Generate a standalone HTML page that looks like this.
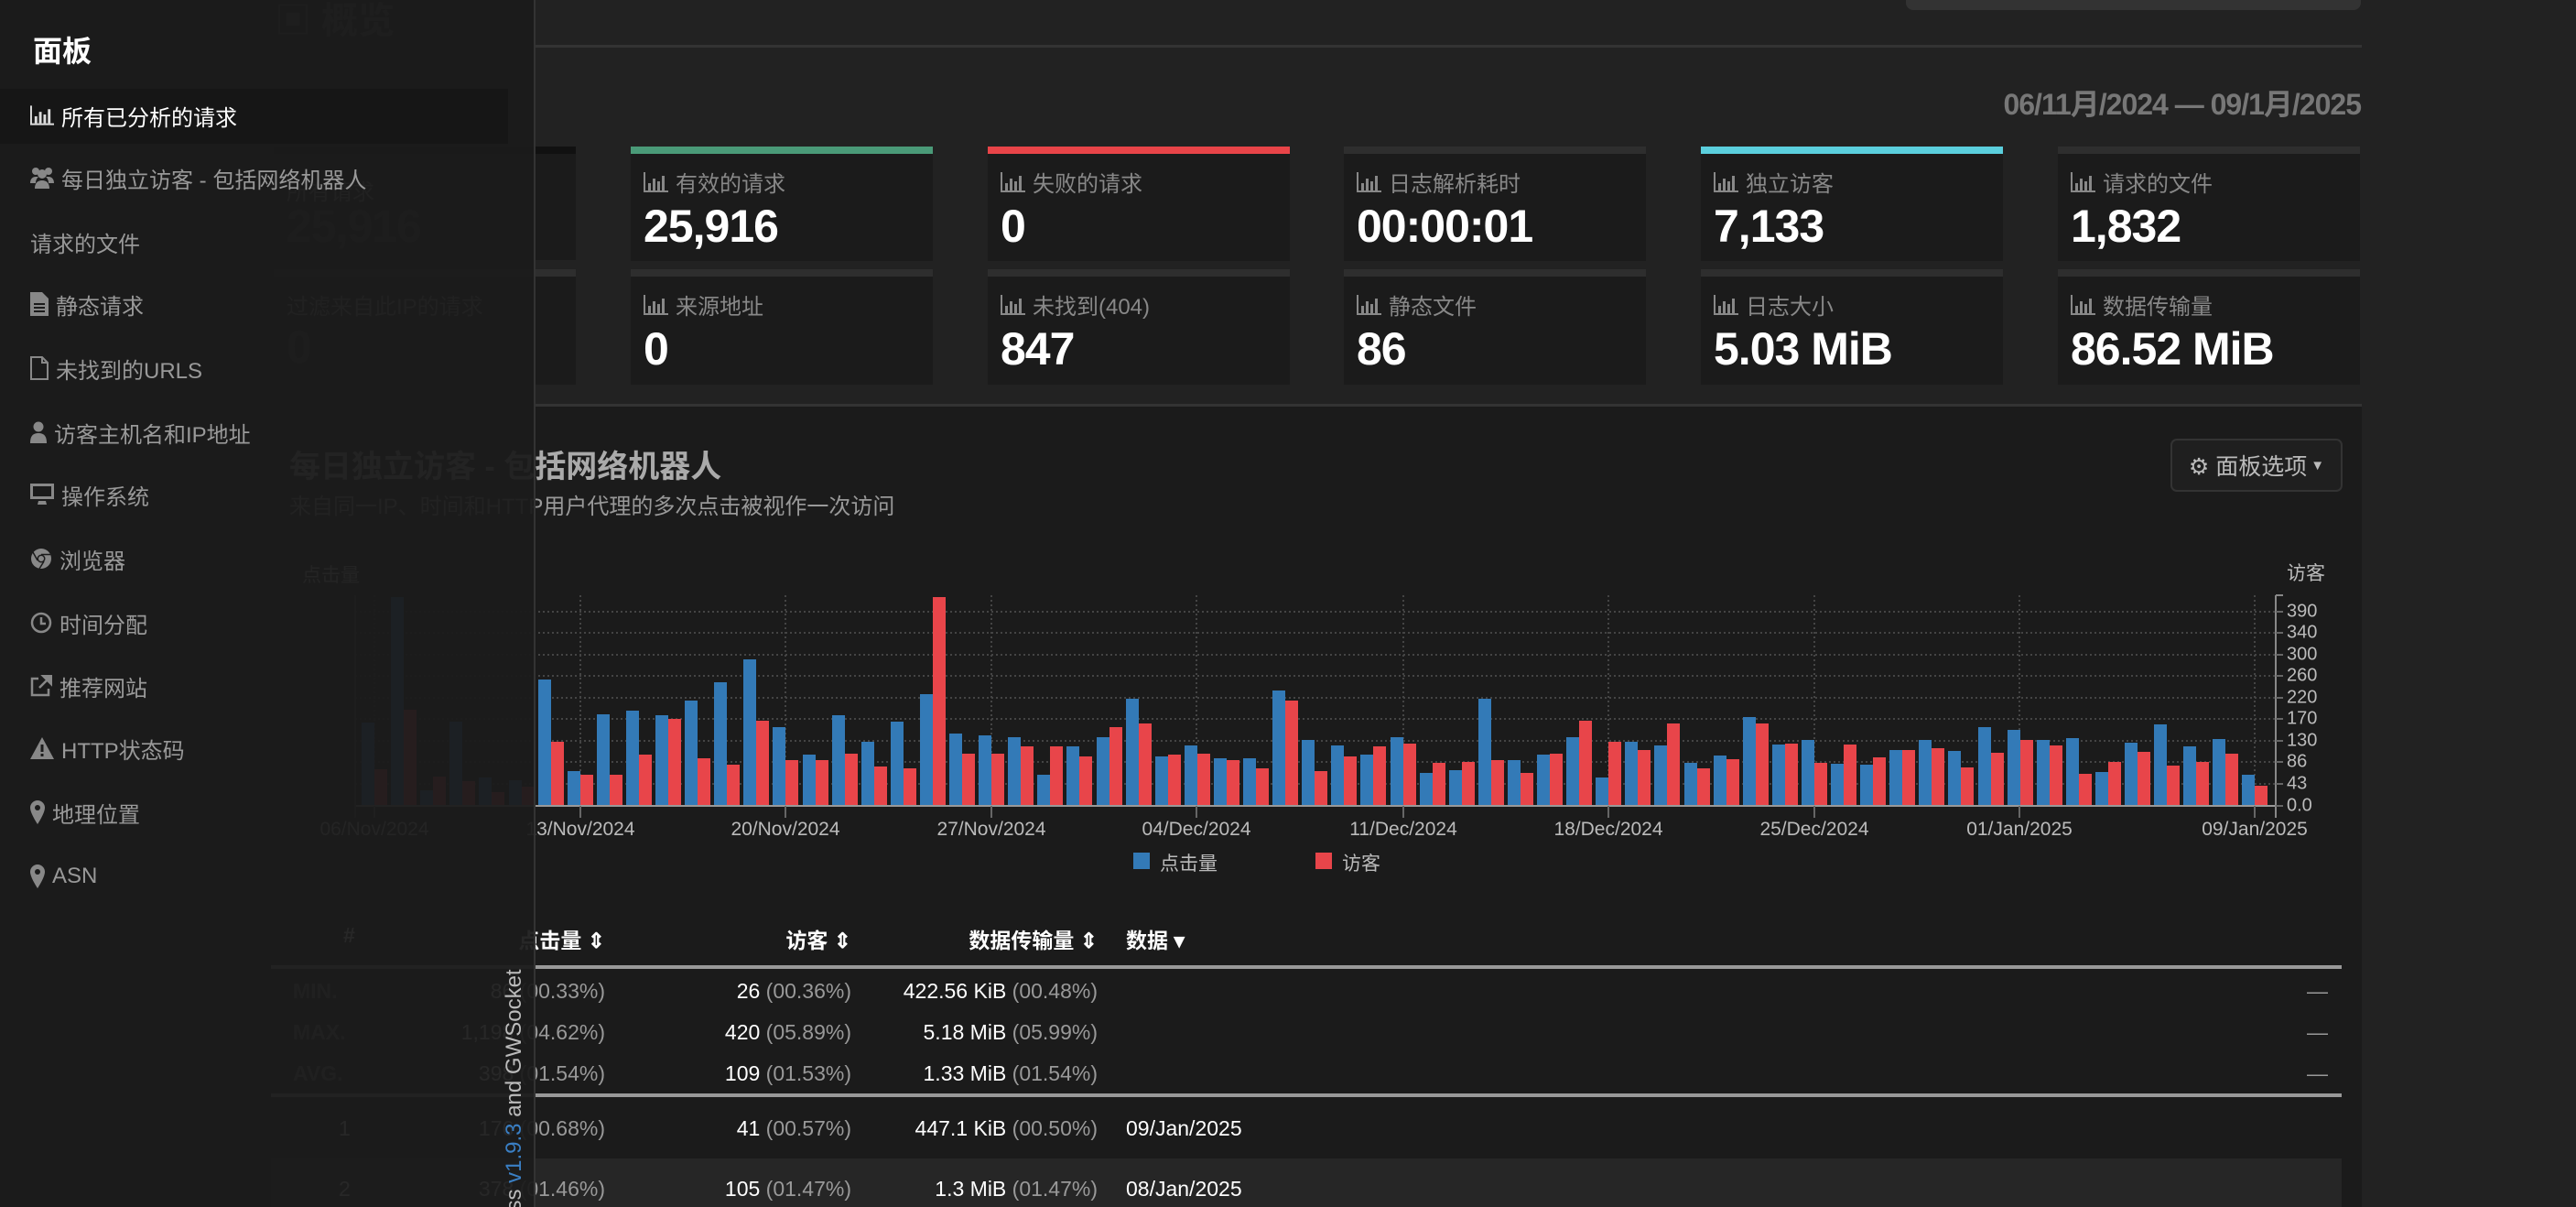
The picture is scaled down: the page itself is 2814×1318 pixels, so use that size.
<!DOCTYPE html>
<html style="overflow:hidden;width:2814px;height:1318px"><head><meta charset="utf-8"><style>
*{margin:0;padding:0;box-sizing:border-box}
body{width:2814px;height:1318px;overflow:hidden;background:#222;font-family:"Liberation Sans","Noto Sans CJK SC",sans-serif;position:relative;color:#ddd}
.a{position:absolute}
.card{position:absolute;width:330px;background:#1b1b1b}
.bar{position:absolute;left:0;right:0;top:0;height:8px;background:#2e2e2e}
.lbl{position:absolute;left:14px;font-size:24px;color:#888;white-space:nowrap;display:flex;align-items:center}
.lbl svg{margin-right:8px}
.val{position:absolute;left:14px;font-size:50px;font-weight:bold;color:#fff;white-space:nowrap;letter-spacing:-1px}
.side{position:absolute;left:0;top:0;width:585px;height:1318px;background:rgba(27,27,27,0.95);border-right:2px solid #333;overflow:hidden}
.it{position:absolute;left:33px;font-size:24px;color:#999;white-space:nowrap;display:flex;align-items:center;height:40px}
.it svg{margin-right:8px;fill:#888}
.th{position:absolute;top:1008px;font-size:23px;font-weight:bold;color:#fff;white-space:nowrap}
.td{position:absolute;font-size:23px;color:#fff;white-space:nowrap;text-align:right}
.td i{font-style:normal;color:#999}
.xl{position:absolute;top:894px;font-size:21px;color:#bbb;transform:translateX(-50%);white-space:nowrap}
.yl{position:absolute;left:2498px;font-size:20px;color:#bbb;transform:translateY(-50%)}
</style></head><body>

<!-- top -->
<div class="a" style="left:2082px;top:0;width:497px;height:11px;background:#333;border-radius:0 0 8px 8px"></div>
<div class="a" style="left:300px;top:-10px;font-size:40px;font-weight:bold;color:#555">▣ 概览</div>
<div class="a" style="left:585px;top:49px;width:1995px;height:3px;background:#333"></div>
<div class="a" style="left:300px;top:94px;font-size:32px;color:#555">所有已分析的请求</div>
<div class="a" style="right:235px;top:89px;font-size:32px;font-weight:bold;color:#777;letter-spacing:-1px">06/11月/2024 — 09/1月/2025</div>

<div class="card" style="left:299px;top:160px;height:124px"><div class="bar" style="background:#111"></div><div class="lbl" style="top:30px">所有请求</div><div class="val" style="top:58px;color:#444">25,916</div></div>
<div class="card" style="left:299px;top:294px;height:126px"><div class="bar"></div><div class="lbl" style="top:21px">过滤来自此IP的请求</div><div class="val" style="top:56px;color:#444">0</div></div>

<div class="card" style="left:689px;top:160px;height:125px"><div class="bar" style="background:#4a9a78"></div><div class="lbl" style="top:21px"><svg width="27" height="22" viewBox="0 0 27 22"><path d="M1 0v21h26" stroke="#888" stroke-width="2" fill="none"/><rect x="5" y="12" width="3" height="8" fill="#888"/><rect x="10" y="7" width="3" height="13" fill="#888"/><rect x="15" y="10" width="3" height="10" fill="#888"/><rect x="20" y="4" width="3" height="16" fill="#888"/></svg>有效的请求</div><div class="val" style="top:58px">25,916</div></div>
<div class="card" style="left:1079px;top:160px;height:125px"><div class="bar" style="background:#e84448"></div><div class="lbl" style="top:21px"><svg width="27" height="22" viewBox="0 0 27 22"><path d="M1 0v21h26" stroke="#888" stroke-width="2" fill="none"/><rect x="5" y="12" width="3" height="8" fill="#888"/><rect x="10" y="7" width="3" height="13" fill="#888"/><rect x="15" y="10" width="3" height="10" fill="#888"/><rect x="20" y="4" width="3" height="16" fill="#888"/></svg>失败的请求</div><div class="val" style="top:58px">0</div></div>
<div class="card" style="left:1468px;top:160px;height:125px"><div class="bar"></div><div class="lbl" style="top:21px"><svg width="27" height="22" viewBox="0 0 27 22"><path d="M1 0v21h26" stroke="#888" stroke-width="2" fill="none"/><rect x="5" y="12" width="3" height="8" fill="#888"/><rect x="10" y="7" width="3" height="13" fill="#888"/><rect x="15" y="10" width="3" height="10" fill="#888"/><rect x="20" y="4" width="3" height="16" fill="#888"/></svg>日志解析耗时</div><div class="val" style="top:58px">00:00:01</div></div>
<div class="card" style="left:1858px;top:160px;height:125px"><div class="bar" style="background:#5bcfdd"></div><div class="lbl" style="top:21px"><svg width="27" height="22" viewBox="0 0 27 22"><path d="M1 0v21h26" stroke="#888" stroke-width="2" fill="none"/><rect x="5" y="12" width="3" height="8" fill="#888"/><rect x="10" y="7" width="3" height="13" fill="#888"/><rect x="15" y="10" width="3" height="10" fill="#888"/><rect x="20" y="4" width="3" height="16" fill="#888"/></svg>独立访客</div><div class="val" style="top:58px">7,133</div></div>
<div class="card" style="left:2248px;top:160px;height:125px"><div class="bar"></div><div class="lbl" style="top:21px"><svg width="27" height="22" viewBox="0 0 27 22"><path d="M1 0v21h26" stroke="#888" stroke-width="2" fill="none"/><rect x="5" y="12" width="3" height="8" fill="#888"/><rect x="10" y="7" width="3" height="13" fill="#888"/><rect x="15" y="10" width="3" height="10" fill="#888"/><rect x="20" y="4" width="3" height="16" fill="#888"/></svg>请求的文件</div><div class="val" style="top:58px">1,832</div></div>

<div class="card" style="left:689px;top:294px;height:126px"><div class="bar"></div><div class="lbl" style="top:21px"><svg width="27" height="22" viewBox="0 0 27 22"><path d="M1 0v21h26" stroke="#888" stroke-width="2" fill="none"/><rect x="5" y="12" width="3" height="8" fill="#888"/><rect x="10" y="7" width="3" height="13" fill="#888"/><rect x="15" y="10" width="3" height="10" fill="#888"/><rect x="20" y="4" width="3" height="16" fill="#888"/></svg>来源地址</div><div class="val" style="top:58px">0</div></div>
<div class="card" style="left:1079px;top:294px;height:126px"><div class="bar"></div><div class="lbl" style="top:21px"><svg width="27" height="22" viewBox="0 0 27 22"><path d="M1 0v21h26" stroke="#888" stroke-width="2" fill="none"/><rect x="5" y="12" width="3" height="8" fill="#888"/><rect x="10" y="7" width="3" height="13" fill="#888"/><rect x="15" y="10" width="3" height="10" fill="#888"/><rect x="20" y="4" width="3" height="16" fill="#888"/></svg>未找到(404)</div><div class="val" style="top:58px">847</div></div>
<div class="card" style="left:1468px;top:294px;height:126px"><div class="bar"></div><div class="lbl" style="top:21px"><svg width="27" height="22" viewBox="0 0 27 22"><path d="M1 0v21h26" stroke="#888" stroke-width="2" fill="none"/><rect x="5" y="12" width="3" height="8" fill="#888"/><rect x="10" y="7" width="3" height="13" fill="#888"/><rect x="15" y="10" width="3" height="10" fill="#888"/><rect x="20" y="4" width="3" height="16" fill="#888"/></svg>静态文件</div><div class="val" style="top:58px">86</div></div>
<div class="card" style="left:1858px;top:294px;height:126px"><div class="bar"></div><div class="lbl" style="top:21px"><svg width="27" height="22" viewBox="0 0 27 22"><path d="M1 0v21h26" stroke="#888" stroke-width="2" fill="none"/><rect x="5" y="12" width="3" height="8" fill="#888"/><rect x="10" y="7" width="3" height="13" fill="#888"/><rect x="15" y="10" width="3" height="10" fill="#888"/><rect x="20" y="4" width="3" height="16" fill="#888"/></svg>日志大小</div><div class="val" style="top:58px">5.03 MiB</div></div>
<div class="card" style="left:2248px;top:294px;height:126px"><div class="bar"></div><div class="lbl" style="top:21px"><svg width="27" height="22" viewBox="0 0 27 22"><path d="M1 0v21h26" stroke="#888" stroke-width="2" fill="none"/><rect x="5" y="12" width="3" height="8" fill="#888"/><rect x="10" y="7" width="3" height="13" fill="#888"/><rect x="15" y="10" width="3" height="10" fill="#888"/><rect x="20" y="4" width="3" height="16" fill="#888"/></svg>数据传输量</div><div class="val" style="top:58px">86.52 MiB</div></div>

<div class="a" style="left:585px;top:441px;width:1995px;height:3px;background:#333"></div>
<!-- chart section -->
<div class="a" style="left:296px;top:444px;width:2284px;height:874px;background:#1b1b1b"></div>
<div class="a" style="left:316px;top:482px;font-size:34px;font-weight:bold;color:#aaa;white-space:nowrap">每日独立访客 - 包括网络机器人</div>
<div class="a" style="left:316px;top:533px;font-size:24px;color:#999;white-space:nowrap">来自同一IP、时间和HTTP用户代理的多次点击被视作一次访问</div>
<div class="a" style="left:2371px;top:479px;width:188px;height:58px;background:#1f1f1f;border:2px solid #333;border-radius:7px;color:#bbb;font-size:25px;display:flex;align-items:center;justify-content:center;white-space:nowrap">⚙ 面板选项 <span style="font-size:15px;margin-left:4px">▼</span></div>

<svg class="a" style="left:0;top:0" width="2814" height="1318">
<g stroke="#444" stroke-width="2" stroke-dasharray="2,3">
<path d="M388 668H2486M388 691H2486M388 715H2486M388 738H2486M388 762H2486M388 785H2486M388 809H2486M388 832H2486M388 856H2486"/>
<path d="M409 650V880M634 650V880M858 650V880M1083 650V880M1307 650V880M1533 650V880M1757 650V880M1982 650V880M2206 650V880M2463 650V880"/>
</g>
<g fill="#337ab7">
<rect x="395" y="789" width="14" height="91"/><rect x="427" y="652" width="14" height="228"/><rect x="459" y="863" width="14" height="17"/><rect x="491" y="788" width="14" height="92"/><rect x="523" y="849" width="14" height="31"/><rect x="556" y="852" width="14" height="28"/><rect x="588" y="742" width="14" height="138"/><rect x="620" y="842" width="14" height="38"/><rect x="652" y="780" width="14" height="100"/><rect x="684" y="776" width="14" height="104"/><rect x="716" y="781" width="14" height="99"/><rect x="748" y="765" width="14" height="115"/><rect x="780" y="745" width="14" height="135"/><rect x="812" y="720" width="14" height="160"/><rect x="844" y="794" width="14" height="86"/><rect x="877" y="824" width="14" height="56"/><rect x="909" y="781" width="14" height="99"/><rect x="941" y="810" width="14" height="70"/><rect x="973" y="788" width="14" height="92"/><rect x="1005" y="758" width="14" height="122"/><rect x="1037" y="801" width="14" height="79"/><rect x="1069" y="803" width="14" height="77"/><rect x="1101" y="805" width="14" height="75"/><rect x="1133" y="846" width="14" height="34"/><rect x="1165" y="815" width="14" height="65"/><rect x="1198" y="805" width="14" height="75"/><rect x="1230" y="763" width="14" height="117"/><rect x="1262" y="826" width="14" height="54"/><rect x="1294" y="814" width="14" height="66"/><rect x="1326" y="828" width="14" height="52"/><rect x="1358" y="828" width="14" height="52"/><rect x="1390" y="754" width="14" height="126"/><rect x="1422" y="808" width="14" height="72"/><rect x="1454" y="814" width="14" height="66"/><rect x="1486" y="824" width="14" height="56"/><rect x="1519" y="805" width="14" height="75"/><rect x="1551" y="844" width="14" height="36"/><rect x="1583" y="841" width="14" height="39"/><rect x="1615" y="763" width="14" height="117"/><rect x="1647" y="830" width="14" height="50"/><rect x="1679" y="824" width="14" height="56"/><rect x="1711" y="805" width="14" height="75"/><rect x="1743" y="849" width="14" height="31"/><rect x="1775" y="810" width="14" height="70"/><rect x="1807" y="814" width="14" height="66"/><rect x="1840" y="833" width="14" height="47"/><rect x="1872" y="825" width="14" height="55"/><rect x="1904" y="783" width="14" height="97"/><rect x="1936" y="813" width="14" height="67"/><rect x="1968" y="808" width="14" height="72"/><rect x="2000" y="834" width="14" height="46"/><rect x="2032" y="835" width="14" height="45"/><rect x="2064" y="819" width="14" height="61"/><rect x="2096" y="808" width="14" height="72"/><rect x="2128" y="820" width="14" height="60"/><rect x="2161" y="794" width="14" height="86"/><rect x="2193" y="797" width="14" height="83"/><rect x="2225" y="808" width="14" height="72"/><rect x="2257" y="806" width="14" height="74"/><rect x="2289" y="843" width="14" height="37"/><rect x="2321" y="811" width="14" height="69"/><rect x="2353" y="791" width="14" height="89"/><rect x="2385" y="815" width="14" height="65"/><rect x="2417" y="807" width="14" height="73"/><rect x="2449" y="846" width="14" height="34"/>
</g>
<g fill="#e8454a">
<rect x="409" y="840" width="14" height="40"/><rect x="441" y="775" width="14" height="105"/><rect x="473" y="848" width="14" height="32"/><rect x="505" y="853" width="14" height="27"/><rect x="537" y="865" width="14" height="15"/><rect x="570" y="859" width="14" height="21"/><rect x="602" y="810" width="14" height="70"/><rect x="634" y="846" width="14" height="34"/><rect x="666" y="846" width="14" height="34"/><rect x="698" y="824" width="14" height="56"/><rect x="730" y="785" width="14" height="95"/><rect x="762" y="828" width="14" height="52"/><rect x="794" y="835" width="14" height="45"/><rect x="826" y="787" width="14" height="93"/><rect x="858" y="830" width="14" height="50"/><rect x="891" y="830" width="14" height="50"/><rect x="923" y="823" width="14" height="57"/><rect x="955" y="837" width="14" height="43"/><rect x="987" y="839" width="14" height="41"/><rect x="1019" y="652" width="14" height="228"/><rect x="1051" y="823" width="14" height="57"/><rect x="1083" y="823" width="14" height="57"/><rect x="1115" y="815" width="14" height="65"/><rect x="1147" y="815" width="14" height="65"/><rect x="1179" y="826" width="14" height="54"/><rect x="1212" y="794" width="14" height="86"/><rect x="1244" y="790" width="14" height="90"/><rect x="1276" y="824" width="14" height="56"/><rect x="1308" y="823" width="14" height="57"/><rect x="1340" y="830" width="14" height="50"/><rect x="1372" y="839" width="14" height="41"/><rect x="1404" y="765" width="14" height="115"/><rect x="1436" y="842" width="14" height="38"/><rect x="1468" y="826" width="14" height="54"/><rect x="1500" y="815" width="14" height="65"/><rect x="1533" y="812" width="14" height="68"/><rect x="1565" y="833" width="14" height="47"/><rect x="1597" y="832" width="14" height="48"/><rect x="1629" y="830" width="14" height="50"/><rect x="1661" y="844" width="14" height="36"/><rect x="1693" y="823" width="14" height="57"/><rect x="1725" y="787" width="14" height="93"/><rect x="1757" y="810" width="14" height="70"/><rect x="1789" y="819" width="14" height="61"/><rect x="1821" y="790" width="14" height="90"/><rect x="1854" y="839" width="14" height="41"/><rect x="1886" y="829" width="14" height="51"/><rect x="1918" y="790" width="14" height="90"/><rect x="1950" y="812" width="14" height="68"/><rect x="1982" y="833" width="14" height="47"/><rect x="2014" y="813" width="14" height="67"/><rect x="2046" y="827" width="14" height="53"/><rect x="2078" y="819" width="14" height="61"/><rect x="2110" y="817" width="14" height="63"/><rect x="2142" y="838" width="14" height="42"/><rect x="2175" y="822" width="14" height="58"/><rect x="2207" y="808" width="14" height="72"/><rect x="2239" y="814" width="14" height="66"/><rect x="2271" y="845" width="14" height="35"/><rect x="2303" y="832" width="14" height="48"/><rect x="2335" y="821" width="14" height="59"/><rect x="2367" y="836" width="14" height="44"/><rect x="2399" y="832" width="14" height="48"/><rect x="2431" y="823" width="14" height="57"/><rect x="2463" y="858" width="14" height="22"/>
</g>
<path d="M388 880H2486" stroke="#999" stroke-width="2"/>
<path d="M2486 650V893M2486 650h8" stroke="#888" stroke-width="2" fill="none"/>
<path d="M388 650V893" stroke="#555" stroke-width="2"/>
<g stroke="#666" stroke-width="2"><path d="M2486 668h8M2486 691h8M2486 715h8M2486 738h8M2486 762h8M2486 785h8M2486 809h8M2486 832h8M2486 856h8M2486 880h8"/>
<path d="M409 880v13M634 880v13M858 880v13M1083 880v13M1307 880v13M1533 880v13M1757 880v13M1982 880v13M2206 880v13M2463 880v13"/></g>
<rect x="1238" y="931" width="18" height="18" fill="#337ab7"/><rect x="1437" y="931" width="18" height="18" fill="#e8454a"/>
</svg>
<div class="yl" style="top:668px">390</div><div class="yl" style="top:691px">340</div><div class="yl" style="top:715px">300</div><div class="yl" style="top:738px">260</div><div class="yl" style="top:762px">220</div><div class="yl" style="top:785px">170</div><div class="yl" style="top:809px">130</div><div class="yl" style="top:832px">86</div><div class="yl" style="top:856px">43</div><div class="yl" style="top:880px">0.0</div>
<div class="a" style="left:2498px;top:610px;font-size:21px;color:#bbb">访客</div>
<div class="a" style="left:330px;top:612px;font-size:21px;color:#bbb">点击量</div>
<div class="xl" style="left:409px">06/Nov/2024</div><div class="xl" style="left:634px">13/Nov/2024</div><div class="xl" style="left:858px">20/Nov/2024</div><div class="xl" style="left:1083px">27/Nov/2024</div><div class="xl" style="left:1307px">04/Dec/2024</div><div class="xl" style="left:1533px">11/Dec/2024</div><div class="xl" style="left:1757px">18/Dec/2024</div><div class="xl" style="left:1982px">25/Dec/2024</div><div class="xl" style="left:2206px">01/Jan/2025</div><div class="xl" style="left:2463px">09/Jan/2025</div>
<div class="a" style="left:1267px;top:927px;font-size:21px;color:#bbb">点击量</div>
<div class="a" style="left:1466px;top:927px;font-size:21px;color:#bbb">访客</div>

<!-- table -->
<div class="th" style="left:375px">#</div>
<div class="th" style="right:2153px">点击量 ⇕</div>
<div class="th" style="right:1884px">访客 ⇕</div>
<div class="th" style="right:1615px">数据传输量 ⇕</div>
<div class="th" style="left:1230px">数据 ▾</div>
<div class="a" style="left:296px;top:1054px;width:2262px;height:4px;background:#999"></div>
<div class="a" style="left:296px;top:1194px;width:2262px;height:4px;background:#999"></div>
<div class="a" style="left:296px;top:1265px;width:2262px;height:53px;background:#262626"></div>
<div class="td" style="left:320px;top:1069px;font-weight:bold;color:#777">MIN.</div>
<div class="td" style="left:320px;top:1114px;font-weight:bold;color:#777">MAX.</div>
<div class="td" style="left:320px;top:1159px;font-weight:bold;color:#777">AVG.</div>
<div class="td" style="left:370px;top:1219px">1</div>
<div class="td" style="left:370px;top:1285px">2</div>
<div class="td" style="right:2153px;top:1069px">86 <i>(00.33%)</i></div>
<div class="td" style="right:2153px;top:1114px">1,198 <i>(04.62%)</i></div>
<div class="td" style="right:2153px;top:1159px">398 <i>(01.54%)</i></div>
<div class="td" style="right:2153px;top:1219px">176 <i>(00.68%)</i></div>
<div class="td" style="right:2153px;top:1285px">378 <i>(01.46%)</i></div>
<div class="td" style="right:1884px;top:1069px">26 <i>(00.36%)</i></div>
<div class="td" style="right:1884px;top:1114px">420 <i>(05.89%)</i></div>
<div class="td" style="right:1884px;top:1159px">109 <i>(01.53%)</i></div>
<div class="td" style="right:1884px;top:1219px">41 <i>(00.57%)</i></div>
<div class="td" style="right:1884px;top:1285px">105 <i>(01.47%)</i></div>
<div class="td" style="right:1615px;top:1069px">422.56 KiB <i>(00.48%)</i></div>
<div class="td" style="right:1615px;top:1114px">5.18 MiB <i>(05.99%)</i></div>
<div class="td" style="right:1615px;top:1159px">1.33 MiB <i>(01.54%)</i></div>
<div class="td" style="right:1615px;top:1219px">447.1 KiB <i>(00.50%)</i></div>
<div class="td" style="right:1615px;top:1285px">1.3 MiB <i>(01.47%)</i></div>
<div class="td" style="left:1230px;top:1219px">09/Jan/2025</div>
<div class="td" style="left:1230px;top:1285px">08/Jan/2025</div>
<div class="td" style="left:2520px;top:1069px;color:#999">—</div>
<div class="td" style="left:2520px;top:1114px;color:#999">—</div>
<div class="td" style="left:2520px;top:1159px;color:#999">—</div>

<!-- sidebar -->
<div class="side">
<div class="a" style="left:36px;top:31px;font-size:32px;font-weight:bold;color:#fff">面板</div>
<div class="a" style="left:0;top:97px;width:555px;height:60px;background:#161616"></div>
<div class="it" style="top:106px;color:#fff"><svg width="26" height="22" viewBox="0 0 27 22"><path d="M1 0v21h26" stroke="#ddd" stroke-width="2" fill="none"/><rect x="5" y="12" width="3" height="8" fill="#ddd"/><rect x="10" y="7" width="3" height="13" fill="#ddd"/><rect x="15" y="10" width="3" height="10" fill="#ddd"/><rect x="20" y="4" width="3" height="16" fill="#ddd"/></svg>所有已分析的请求</div>
<div class="it" style="top:174px"><svg width="26" height="24" viewBox="0 0 26 24"><circle cx="6" cy="5" r="4"/><circle cx="20" cy="5" r="4"/><circle cx="13" cy="8" r="5"/><path d="M0 18c0-5 3-7 6-7h3c-2 2-3 4-3 7zM26 18c0-5-3-7-6-7h-3c2 2 3 4 3 7zM5 24c0-6 3-9 8-9s8 3 8 9z"/></svg>每日独立访客 - 包括网络机器人</div>
<div class="it" style="top:244px">请求的文件</div>
<div class="it" style="top:312px"><svg width="20" height="26" viewBox="0 0 20 26"><path d="M0 0h13l7 7v19H0z M4 12h12v2H4zM4 16h12v2H4zM4 20h12v2H4z" fill-rule="evenodd"/></svg>静态请求</div>
<div class="it" style="top:382px"><svg width="20" height="26" viewBox="0 0 20 26"><path d="M1 1h12l6 6v18H1z M13 1v6h6" fill="none" stroke="#888" stroke-width="2"/></svg>未找到的URLS</div>
<div class="it" style="top:452px"><svg width="18" height="24" viewBox="0 0 18 24"><circle cx="9" cy="6" r="5.5"/><path d="M0 24c0-8 3-11 9-11s9 3 9 11z"/></svg>访客主机名和IP地址</div>
<div class="it" style="top:520px"><svg width="26" height="24" viewBox="0 0 26 24"><path d="M0 0h26v17H0zM3 3v11h20V3zM9 19h8l1 4H8z" fill-rule="evenodd"/></svg>操作系统</div>
<div class="it" style="top:590px"><svg width="24" height="24" viewBox="0 0 24 24"><circle cx="12" cy="12" r="11"/><circle cx="12" cy="12" r="4.5" fill="#1b1b1b"/><circle cx="12" cy="12" r="3"/><path d="M12 7.5h10M8 14L3 5M15 15l-5 8" stroke="#1b1b1b" stroke-width="1.5"/></svg>浏览器</div>
<div class="it" style="top:660px"><svg width="24" height="24" viewBox="0 0 24 24"><circle cx="12" cy="12" r="10" fill="none" stroke="#888" stroke-width="2.5"/><path d="M12 6v7h5" fill="none" stroke="#888" stroke-width="2.5"/></svg>时间分配</div>
<div class="it" style="top:729px"><svg width="24" height="24" viewBox="0 0 24 24"><path d="M9 4H2v18h18v-7" fill="none" stroke="#888" stroke-width="2.5"/><path d="M14 1h9v9zM22 2L10 14" stroke="#888" stroke-width="2.5"/></svg>推荐网站</div>
<div class="it" style="top:797px"><svg width="26" height="24" viewBox="0 0 26 24"><path d="M13 0L26 24H0z"/><rect x="11.5" y="8" width="3" height="8" fill="#1b1b1b"/><rect x="11.5" y="18" width="3" height="3" fill="#1b1b1b"/></svg>HTTP状态码</div>
<div class="it" style="top:867px"><svg width="16" height="26" viewBox="0 0 16 26"><path d="M8 0a8 8 0 0 1 8 8c0 6-8 18-8 18S0 14 0 8a8 8 0 0 1 8-8z"/><circle cx="8" cy="8" r="3" fill="#1b1b1b"/></svg>地理位置</div>
<div class="it" style="top:937px"><svg width="16" height="26" viewBox="0 0 16 26"><path d="M8 0a8 8 0 0 1 8 8c0 6-8 18-8 18S0 14 0 8a8 8 0 0 1 8-8z"/><circle cx="8" cy="8" r="3" fill="#1b1b1b"/></svg>ASN</div>
<div class="a" style="left:548px;top:1060px;height:500px;writing-mode:vertical-rl;transform:rotate(180deg);text-align:end;font-size:24px;color:#bbb;white-space:nowrap;line-height:28px">Generated by GoAccess <span style="color:#3a7fc4">v1.9.3</span> and GWSocket</div>
</div>
</body></html>
